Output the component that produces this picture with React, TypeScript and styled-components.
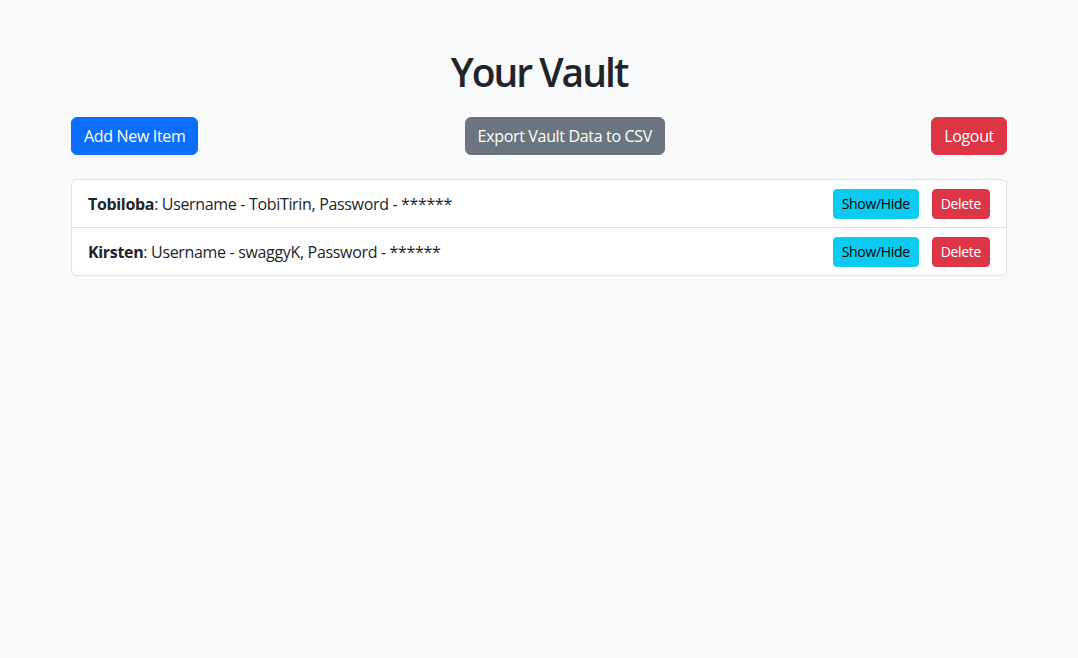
import React from 'react';
import styled, { createGlobalStyle, css } from 'styled-components';

const GlobalStyle = createGlobalStyle`
  * { box-sizing: border-box; }
  body {
    margin: 0;
    background-color: #f8f9fa;
    color: #212529;
    font-family: "Segoe UI", "Open Sans", "Noto Sans", sans-serif;
    font-size: 16px;
    line-height: 1.5;
    letter-spacing: -0.33px;
  }
`;

const Container = styled.div`
  max-width: 960px;
  margin: 0 auto;
  padding: 48px 12px 0;
`;

const Title = styled.h1`
  margin: 0 0 21px;
  text-align: center;
  font-size: 39px;
  font-weight: 600;
  line-height: 48px;
  letter-spacing: -2px;
`;

const Toolbar = styled.div`
  display: flex;
  justify-content: space-between;
  align-items: center;
  margin-bottom: 24px;
`;

type Variant = 'primary' | 'secondary' | 'danger' | 'info';

const colors: Record<Variant, { bg: string; fg: string }> = {
  primary: { bg: '#0d6efd', fg: '#fff' },
  secondary: { bg: '#6c757d', fg: '#fff' },
  danger: { bg: '#dc3545', fg: '#fff' },
  info: { bg: '#0dcaf0', fg: '#000' },
};

const Button = styled.button<{ $variant: Variant; $small?: boolean }>`
  font-family: inherit;
  letter-spacing: inherit;
  border: 1px solid ${(p) => colors[p.$variant].bg};
  background-color: ${(p) => colors[p.$variant].bg};
  color: ${(p) => colors[p.$variant].fg};
  font-size: 16px;
  line-height: 24px;
  padding: 6px 12px;
  border-radius: 6px;
  cursor: pointer;
  ${(p) =>
    p.$small &&
    css`
      font-size: 14px;
      line-height: 20px;
      padding: 4px 8px;
      border-radius: 4px;
    `}
`;

const List = styled.ul`
  list-style: none;
  margin: 0;
  padding: 0;
  background: #fff;
  border: 1px solid #dee2e6;
  border-radius: 6px;
`;

const Item = styled.li`
  box-sizing: content-box;
  display: flex;
  justify-content: space-between;
  align-items: center;
  height: 47px;
  padding: 0 16px;
  & + & {
    border-top: 1px solid #dee2e6;
  }
`;

const Actions = styled.div`
  display: flex;
  gap: 13px;
`;

const items = [
  { site: 'Tobiloba', username: 'TobiTirin' },
  { site: 'Kirsten', username: 'swaggyK' },
];

export default function App() {
  return (
    <>
      <GlobalStyle />
      <Container>
        <Title>Your Vault</Title>
        <Toolbar>
          <Button $variant="primary">Add New Item</Button>
          <Button $variant="secondary">Export Vault Data to CSV</Button>
          <Button $variant="danger">Logout</Button>
        </Toolbar>
        <List>
          {items.map((it) => (
            <Item key={it.site}>
              <span>
                <strong>{it.site}</strong>: Username - {it.username}, Password - ******
              </span>
              <Actions>
                <Button $variant="info" $small>
                  Show/Hide
                </Button>
                <Button $variant="danger" $small>
                  Delete
                </Button>
              </Actions>
            </Item>
          ))}
        </List>
      </Container>
    </>
  );
}
